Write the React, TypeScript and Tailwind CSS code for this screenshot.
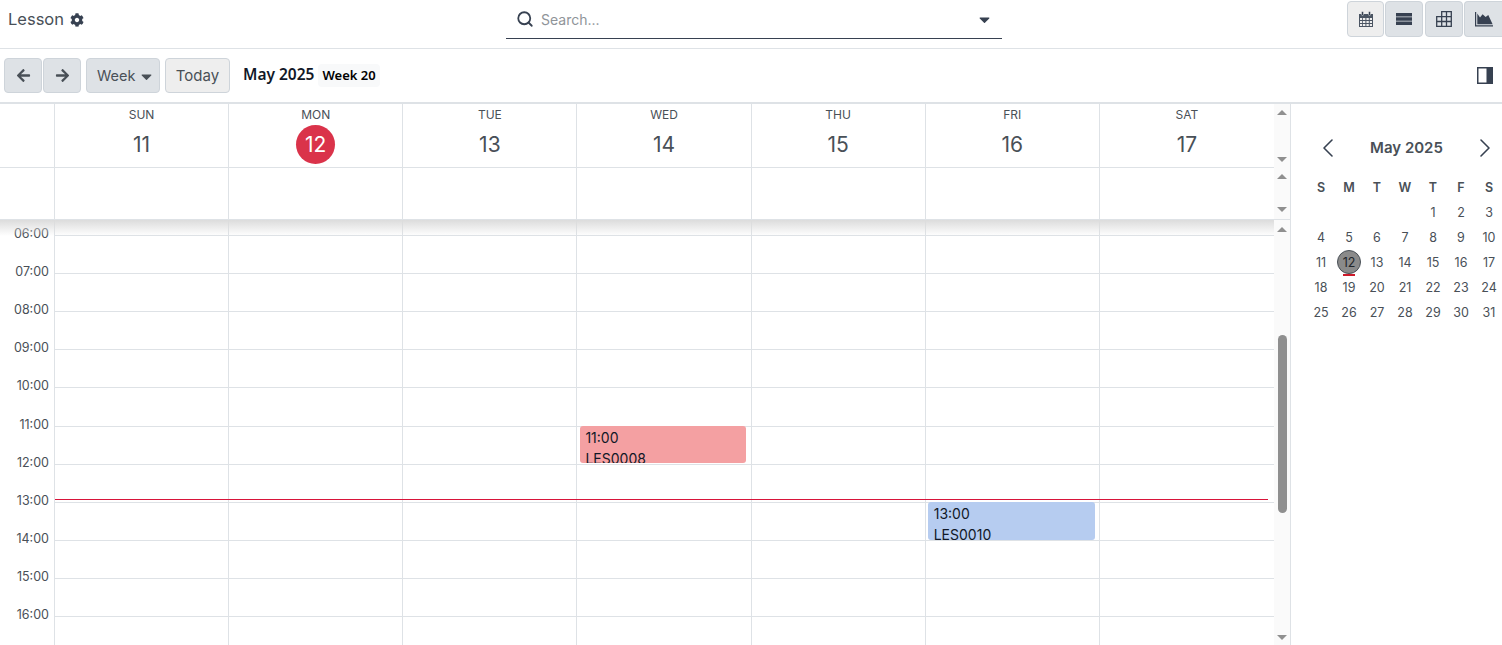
import { FaArrowLeft, FaArrowRight, FaCaretDown, FaCog } from 'react-icons/fa'
import { ChevronLeft, ChevronRight, Search } from 'lucide-react'

const days = [
  ['SUN', '11'],
  ['MON', '12'],
  ['TUE', '13'],
  ['WED', '14'],
  ['THU', '15'],
  ['FRI', '16'],
  ['SAT', '17'],
]
const hours = ['06:00', '07:00', '08:00', '09:00', '10:00', '11:00', '12:00', '13:00', '14:00', '15:00', '16:00']
const miniDays = ['S', 'M', 'T', 'W', 'T', 'F', 'S']
const miniDates = ['', '', '', '', 1, 2, 3, 4, 5, 6, 7, 8, 9, 10, 11, 12, 13, 14, 15, 16, 17, 18, 19, 20, 21, 22, 23, 24, 25, 26, 27, 28, 29, 30, 31]

function Up() {
  return <div className="h-0 w-0 border-x-[5px] border-b-[5px] border-x-transparent border-b-[#8f8f8f]" />
}
function Down() {
  return <div className="h-0 w-0 border-x-[5px] border-t-[5px] border-x-transparent border-t-[#8f8f8f]" />
}

function CalendarIcon() {
  return (
    <svg width="16" height="16" viewBox="0 0 16 16">
      <path d="M1 3h14v13H1z" fill="#4b5563" />
      <path d="M2 7h2.2v2H2zM5 7h2.4v2H5zM8.4 7h2.4v2H8.4zM11.8 7H14v2h-2.2zM2 10h2.2v2H2zM5 10h2.4v2H5zM8.4 10h2.4v2H8.4zM11.800 10H14v2h-2.2zM2 13h2.2v2H2zM5 13h2.4v2H5zM8.4 13h2.4v2H8.4zM11.8 13H14v2h-2.2z" fill="#eee" />
      <rect x="3.5" y="0.5" width="2" height="4" rx="1" fill="#374151" stroke="#eee" strokeWidth="0.5" />
      <rect x="10.5" y="0.5" width="2" height="4" rx="1" fill="#374151" stroke="#eee" strokeWidth="0.5" />
    </svg>
  )
}

function ListIcon() {
  return (
    <svg width="16" height="12" viewBox="0 0 16 12">
      <path d="M0 0h16v3.400H0zM0 4.300h16v3.400H0zM0 8.600h16V12H0z" fill="#374151" />
    </svg>
  )
}

function PivotIcon() {
  return (
    <svg width="16" height="16" viewBox="0 0 16 16" fill="none" stroke="#374151" strokeWidth="1.3">
      <path d="M.7 5.600h5V.7h9.600v14.600H.7zM.7 10.500h14.600M5.700 5.600v9.700M10.500.7v14.600M5.700 5.600h9.600" />
    </svg>
  )
}

function AreaIcon() {
  return (
    <svg width="18" height="15" viewBox="0 0 18 15">
      <path d="M0 0h1.200v13.300H18v1.200H0z" fill="#374151" />
      <path d="M2.300 12.300V1.600L5 5.600l2.600-3.300 3 2.700 2.700-2 4.300 9.300z" fill="#374151" />
    </svg>
  )
}

function PanelIcon() {
  return (
    <svg width="16" height="17" viewBox="0 0 16 17">
      <rect x="0.75" y="0.75" width="14.500" height="15.500" fill="#fff" stroke="#374151" strokeWidth="1.500" />
      <rect x="9.500" y="1" width="6" height="15" fill="#374151" />
    </svg>
  )
}

export default function App() {
  return (
    <div className="flex h-[645px] w-[1502px] flex-col overflow-hidden bg-white font-['Inter',sans-serif] text-[#495057]">
      {/* control panel */}
      <div className="flex h-[49px] shrink-0 items-start border-b border-[#dee2e6]">
        <div className="flex h-[38px] w-[506px] items-center gap-[6px] pl-2 text-[16.500px] text-[#495057]">
          Lesson <FaCog className="mt-px text-[14px] text-[#374151]" />
        </div>
        <div className="flex h-[39px] w-[496px] items-center border-b border-[#374151] pl-[10px] pr-[9px]">
          <Search size={18} strokeWidth={2.400} className="text-[#374151]" />
          <span className="ml-[7px] flex-1 text-[14px] text-[#8f9499]">Search...</span>
          <FaCaretDown className="text-[17px] text-[#374151]" />
        </div>
        <div className="ml-auto flex pt-px">
          <button className="flex h-[36px] w-[37px] items-center justify-center rounded border border-[#ced4da] bg-[#eeeeee]">
            <CalendarIcon />
          </button>
          <button className="ml-px flex h-[36px] w-[38px] items-center justify-center rounded border border-[#ced4da] bg-[#dee2e6]">
            <ListIcon />
          </button>
          <button className="ml-[2px] flex h-[36px] w-[38px] items-center justify-center rounded border border-[#ced4da] bg-[#dee2e6]">
            <PivotIcon />
          </button>
          <button className="ml-px flex h-[36px] w-[38px] items-center justify-center rounded-l border border-r-0 border-[#ced4da] bg-[#dee2e6]">
            <AreaIcon />
          </button>
        </div>
      </div>

      {/* toolbar */}
      <div className="flex h-[55px] shrink-0 items-center border-b-2 border-[#dee2e6] pl-1 pr-[9px]">
        <button className="flex h-[35px] w-[38px] items-center justify-center rounded border border-[#ced4da] bg-[#dee2e6]">
          <FaArrowLeft className="text-[15px] text-[#495057]" />
        </button>
        <button className="ml-px flex h-[35px] w-[38px] items-center justify-center rounded border border-[#ced4da] bg-[#dee2e6]">
          <FaArrowRight className="text-[15px] text-[#495057]" />
        </button>
        <button className="ml-[5px] flex h-[35px] w-[74px] items-center gap-[3px] rounded border border-[#ced4da] bg-[#dee2e6] pl-[10px] pt-px text-[14.500px] text-[#495057]">
          Week <FaCaretDown className="text-[17px] text-[#495057]" />
        </button>
        <button className="ml-[5px] h-[35px] w-[65px] rounded border border-[#ced4da] bg-[#eeeeee] pt-px text-[15px] text-[#495057]">
          Today
        </button>
        <div className="-mt-px ml-[13px] font-['Noto_Sans',sans-serif] text-[15.500px] font-semibold text-[#111827]">May 2025</div>
        <div className="ml-[4px] rounded bg-[#f8f9fa] px-[4px] py-[2px] font-['Noto_Sans',sans-serif] text-[13px] font-semibold text-black">
          Week 20
        </div>
        <div className="mb-px ml-auto">
          <PanelIcon />
        </div>
      </div>

      <div className="flex min-h-0 flex-1">
        <div className="relative flex w-[1291px] shrink-0 flex-col border-r border-[#dee2e6]">
          {/* day headers */}
          <div className="flex h-[64px] shrink-0">
            <div className="grid w-[1274px] grid-cols-[54px_repeat(6,174.15px)_1fr] border-b border-[#dee2e6]">
              <div />
              {days.map(([name, num]) => (
                <div key={name} className="flex flex-col items-center border-l border-[#dee2e6]">
                  <div className="mt-[4px] text-[12px] leading-[14px] text-[#495057]">{name}</div>
                  {num === '12' ? (
                    <div className="mt-[3px] flex h-[39px] w-[39px] items-center justify-center rounded-full bg-[#da334a] text-[21px] text-white">
                      {num}
                    </div>
                  ) : (
                    <div className="mt-[3px] flex h-[39px] items-center text-[21px] text-[#495057]">{num}</div>
                  )}
                </div>
              ))}
            </div>
            <div className="flex w-[16px] flex-col items-center justify-between bg-[#fafafa] py-[6px]">
              <Up />
              <Down />
            </div>
          </div>

          {/* all day row */}
          <div className="flex h-[52px] shrink-0 border-b border-[#dee2e6]">
            <div className="grid w-[1274px] grid-cols-[54px_repeat(6,174.15px)_1fr]">
              <div />
              {days.map(([name]) => (
                <div key={name} className="border-l border-[#dee2e6]" />
              ))}
            </div>
            <div className="flex w-[16px] flex-col items-center justify-between bg-[#fafafa] pb-[7px] pt-[6px]">
              <Up />
              <Down />
            </div>
          </div>

          {/* hour grid */}
          <div className="relative flex min-h-0 flex-1 overflow-hidden">
            <div className="relative w-[1274px]">
              <div className="grid h-[15px] grid-cols-[54px_repeat(6,174.15px)_1fr]">
                <div />
                {days.map(([name]) => (
                  <div key={name} className="border-l border-[#dee2e6]" />
                ))}
              </div>
              {[...hours, ''].map((hour) => (
                <div key={hour} className="grid h-[38.12px] grid-cols-[54px_repeat(6,174.15px)_1fr]">
                  <div className="relative z-10 -mt-[9px] h-4 pr-[5px] text-right text-[12.500px] leading-4 text-[#495057]">
                    {hour}
                  </div>
                  {days.map(([name]) => (
                    <div key={name} className="relative border-l border-t border-[#dee2e6]">
                      {hour === '11:00' && name === 'WED' && (
                        <div className="absolute left-[3px] top-[-1px] z-10 h-[37px] w-[166px] overflow-hidden rounded-[3px] bg-[#f4a0a2] pl-[5px] pr-[6px] pt-[1px] text-[14px] leading-[21px] text-[#111827]">
                          <div>11:00</div>
                          <div>LES0008</div>
                        </div>
                      )}
                      {hour === '13:00' && name === 'FRI' && (
                        <div className="absolute left-[2px] top-[-1px] z-10 h-[38px] w-[167px] overflow-hidden rounded-[3px] bg-[#b6ccf0] px-[6px] pt-[1px] text-[14px] leading-[21px] text-[#111827]">
                          <div>13:00</div>
                          <div>LES0010</div>
                        </div>
                      )}
                    </div>
                  ))}
                </div>
              ))}
              {/* now marker */}
              <div className="absolute left-[55px] top-[279px] z-20 h-px w-[1213px] bg-[#d8143a]" />
            </div>
            <div className="relative flex w-[16px] flex-col items-center bg-[#fafafa] pt-[7px]">
              <Up />
              <div className="mt-[103px] h-[178px] w-[9px] rounded-[5px] bg-[#8f8f8f]" />
              <div className="mt-auto pb-[5px]">
                <Down />
              </div>
            </div>
            {/* shadow under the fixed header */}
            <div className="pointer-events-none absolute left-0 top-0 z-10 h-[16px] w-[1274px] bg-gradient-to-b from-[#dcdcdc] to-white/0" />
          </div>
        </div>

        {/* side calendar */}
        <div className="flex-1 pl-4">
          <div className="mt-[31px] flex h-[26px] w-[195px] items-center justify-between pl-[5px] pr-px">
            <ChevronLeft size={32} strokeWidth={1.200} className="text-[#374151]" />
            <span className="text-[15px] font-semibold text-[#495057]">May 2025</span>
            <ChevronRight size={32} strokeWidth={1.200} className="text-[#374151]" />
          </div>
          <div className="mt-[14px] grid w-[196px] grid-cols-7 text-center text-[12.500px] leading-[25px]">
            {miniDays.map((d, i) => (
              <div key={i} className="font-semibold text-[#495057]">
                {d}
              </div>
            ))}
            {miniDates.map((d, i) => (
              <div key={i} className="relative h-[25px] text-[#495057]">
                {d === 12 ? (
                  <>
                    <div className="absolute left-[2px] top-0 flex h-[24px] w-[24px] items-center justify-center rounded-full border border-[#495057] bg-[#8a8a8a] text-[#212529]">
                      12
                    </div>
                    <div className="absolute bottom-[-1px] left-[8px] h-[2px] w-[12px] bg-[#cc1a2a]" />
                  </>
                ) : (
                  d
                )}
              </div>
            ))}
          </div>
        </div>
      </div>
    </div>
  )
}
